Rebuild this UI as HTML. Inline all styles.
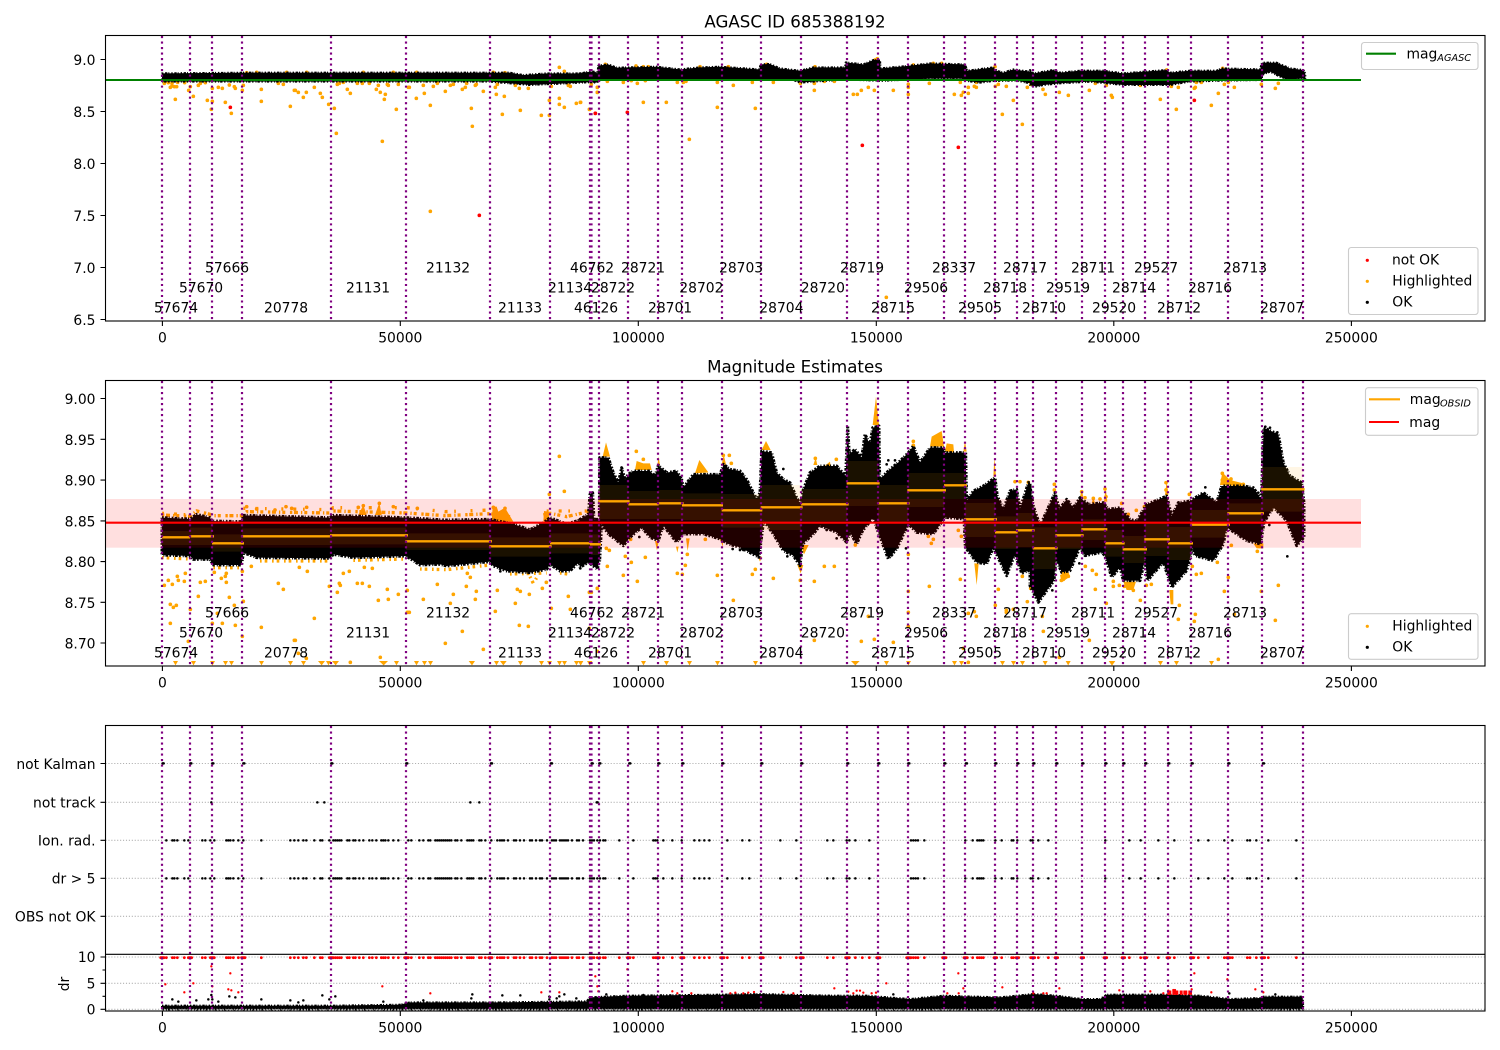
<!DOCTYPE html>
<html><head><meta charset="utf-8"><title>AGASC ID 685388192</title>
<style>
html,body{margin:0;padding:0;background:#fff}
svg{display:block}
text{font-family:"DejaVu Sans","Liberation Sans",sans-serif;font-size:13.89px;fill:#000}
.d{fill:none;stroke-linecap:round}
.vl{stroke:#800080;stroke-width:2.2;stroke-dasharray:2.08 3.43;fill:none}
.gr{stroke:#b0b0b0;stroke-width:1.1;stroke-dasharray:1.1 1.82;fill:none}
.fr{fill:none;stroke:#000;stroke-width:1.1}
.tk{stroke:#000;stroke-width:1.1;fill:none}
.lg{fill:#fff;fill-opacity:.8;stroke:#ccc;stroke-width:1.1}
.bk{fill:#000;stroke:#000;stroke-width:9;stroke-dasharray:5 4 8 3 3 6;stroke-linejoin:round}
.bt{fill:#000;stroke:#000;stroke-width:6;stroke-dasharray:4 5 7 3 3 6;stroke-linejoin:round}
.fz{fill:none;stroke:#ffa500;stroke-width:10}
</style></head><body>
<svg width="1500" height="1050" viewBox="0 0 1500 1050" xmlns="http://www.w3.org/2000/svg">
<rect width="1500" height="1050" fill="#fff"/>

<!-- PANEL 1 -->
<g transform="translate(100,30) scale(.33333)">
<path class="d" stroke="#ffa500" stroke-width="11" d="M193 160h0M205 158h0M216 160h0M211 172h0M216 168h0M223 170h0M230 170h0M233 157h0M254 158h0M226 208h0M266 181h0M271 170h0M280 199h0M295 166h0M301 160h0M316 158h0M322 211h0M337 214h0M334 238h0M337 175h0M355 172h0M367 175h0M376 217h0M388 165h0M394 250h0M403 170h0M406 175h0M427 181h0M430 166h0M484 178h0M484 214h0M535 160h0M550 163h0M571 229h0M583 181h0M586 181h0M595 187h0M610 202h0M619 187h0M643 172h0M661 190h0M667 202h0M686 223h0M703 235h0M709 310h0M712 163h0M718 160h0M730 157h0M742 178h0M751 190h0M772 160h0M787 160h0M808 160h0M829 178h0M835 166h0M841 187h0M847 334h0M853 208h0M856 193h0M862 163h0M865 166h0M889 238h0M895 163h0M925 172h0M928 172h0M949 205h0M970 166h0M973 190h0M991 226h0M991 544h0M1000 169h0M1012 160h0M1036 184h0M1051 166h0M1060 163h0M1087 178h0M1096 172h0M1100 160h0M1114 235h0M1117 289h0M1126 166h0M1129 163h0M1150 184h0M1186 172h0M1192 163h0M1189 193h0M1207 253h0M1213 199h0M1246 166h0M1258 175h0M1261 241h0M1285 175h0M1324 256h0M1348 256h0M1348 211h0M1354 169h0M1378 205h0M1378 112h0M1378 223h0M1393 124h0M1393 232h0M1405 166h0M1411 169h0M1429 220h0M1441 217h0M1468 238h0M1492 172h0M1492 187h0M440 128h0M470 127h0M560 127h0M620 127h0M790 127h0M880 127h0M950 127h0M1180 127h0M1215 128h0"/>
<path class="d" stroke="#f00" stroke-width="11" d="M391 232h0M1138 556h0M1486 250h0"/>
<polygon class="bt" points="186,130 430,128 1230,128 1270,135 1340,130 1470,130 1500,130 1500,155 1400,160 1290,165 1230,160 1170,155 186,155"/>
</g>
<g transform="translate(580,30) scale(.33333)">
<path class="d" stroke="#ffa500" stroke-width="11" d="M2 217h0M29 238h0M34 163h0M52 172h0M52 187h0M82 154h0M130 157h0M154 152h0M172 160h0M190 217h0M196 152h0M259 217h0M292 157h0M310 157h0M318 154h0M328 328h0M412 157h0M412 232h0M460 166h0M517 157h0M526 235h0M580 157h0M661 160h0M703 160h0M703 181h0M733 154h0M763 154h0M820 193h0M832 193h0M844 181h0M865 172h0M883 181h0M919 802h0M940 181h0M985 163h0M985 172h0M985 193h0M1048 160h0M1123 193h0M1141 157h0M1144 196h0M1150 187h0M1165 172h0M1165 190h0M1183 169h0M1189 172h0M1189 157h0M1246 169h0M1255 163h0M1279 169h0M1300 211h0M1267 253h0M1327 283h0M1342 172h0M76 103h0M885 90h0M892 86h0M168 108h0M560 103h0M190 110h0M205 110h0M360 110h0M445 110h0M705 110h0M1000 105h0M1060 100h0M1085 100h0M1245 110h0"/>
<path class="d" stroke="#f00" stroke-width="11" d="M46 250h0M142 247h0M847 346h0M1135 352h0"/>
<polygon class="bt" points="0,130 30,125 42,125 52,130 55,107 85,103 110,113 230,110 300,118 360,112 420,110 538,118 542,103 570,102 600,115 660,122 700,112 795,112 797,97 850,103 880,90 900,90 902,115 980,108 1050,100 1155,103 1162,122 1240,112 1250,122 1270,128 1300,118 1350,125 1350,160 1310,152 1240,153 1200,158 1160,153 1150,146 1050,146 1000,148 900,153 800,148 660,158 640,150 60,150 50,158 0,155"/>
</g>
<g transform="translate(1030,30) scale(.33333)">
<path class="d" stroke="#ffa500" stroke-width="11" d="M3 163h0M39 178h0M46 193h0M88 187h0M115 196h0M178 181h0M196 160h0M229 166h0M244 196h0M247 202h0M331 166h0M391 208h0M424 169h0M445 172h0M439 238h0M493 175h0M496 172h0M499 157h0M514 157h0M544 226h0M565 190h0M583 163h0M595 157h0M613 172h0M694 163h0M736 175h0M745 160h0M410 120h0M578 115h0"/>
<path class="d" stroke="#f00" stroke-width="11" d="M493 211h0"/>
<polygon class="bt" points="0,120 10,130 70,120 90,128 150,122 220,122 280,130 340,125 410,120 420,128 480,122 560,122 575,115 690,118 696,98 740,98 780,115 820,120 826,130 826,145 780,148 760,145 720,125 696,135 696,150 580,152 480,155 420,165 340,165 280,165 230,160 180,155 90,160 40,165 20,170 0,165"/>
</g>
<path d="M105.5 80H1361" stroke="#008000" stroke-width="2.08" fill="none"/>
<path class="vl" d="M162 36V321M190 36V321M212 36V321M242 36V321M331 36V321M406 36V321M490 36V321M550 36V321M590 36V321M591.5 36V321M599 36V321M628 36V321M658 36V321M682 36V321M722 36V321M761 36V321M801 36V321M847 36V321M878 36V321M908 36V321M944 36V321M965 36V321M995 36V321M1017 36V321M1033 36V321M1056 36V321M1082 36V321M1105 36V321M1123 36V321M1145 36V321M1168 36V321M1191 36V321M1228 36V321M1262 36V321M1303 36V321"/>
<g>
<text x="205" y="272.3">57666</text><text x="426" y="272.3">21132</text><text x="570" y="272.3">46762</text><text x="621" y="272.3">28721</text><text x="719" y="272.3">28703</text><text x="840" y="272.3">28719</text><text x="932" y="272.3">28337</text><text x="1003" y="272.3">28717</text><text x="1071" y="272.3">28711</text><text x="1134" y="272.3">29527</text><text x="1223" y="272.3">28713</text>
<text x="179" y="292.3">57670</text><text x="346" y="292.3">21131</text><text x="548" y="292.3">21134</text><text x="591" y="292.3">28722</text><text x="679.3" y="292.3">28702</text><text x="800.8" y="292.3">28720</text><text x="904" y="292.3">29506</text><text x="983" y="292.3">28718</text><text x="1046" y="292.3">29519</text><text x="1112" y="292.3">28714</text><text x="1188" y="292.3">28716</text>
<text x="154" y="312.3">57674</text><text x="264" y="312.3">20778</text><text x="498" y="312.3">21133</text><text x="574" y="312.3">46126</text><text x="648" y="312.3">28701</text><text x="759.3" y="312.3">28704</text><text x="871" y="312.3">28715</text><text x="958" y="312.3">29505</text><text x="1022" y="312.3">28710</text><text x="1092" y="312.3">29520</text><text x="1157" y="312.3">28712</text><text x="1260" y="312.3">28707</text>
</g>
<rect class="fr" x="105.5" y="35.5" width="1379.5" height="285.5"/>
<path class="tk" d="M162.4 321v5M400.3 321v5M638.3 321v5M876.3 321v5M1113.8 321v5M1351.4 321v5M105.5 59.5h-5M105.5 111.5h-5M105.5 163.5h-5M105.5 215.5h-5M105.5 267.5h-5M105.5 319.5h-5"/>
<g text-anchor="end"><text x="95.5" y="65">9.0</text><text x="95.5" y="117">8.5</text><text x="95.5" y="169">8.0</text><text x="95.5" y="221">7.5</text><text x="95.5" y="273">7.0</text><text x="95.5" y="325">6.5</text></g>
<g text-anchor="middle"><text x="162.4" y="342.4">0</text><text x="400.3" y="342.4">50000</text><text x="638.3" y="342.4">100000</text><text x="876.3" y="342.4">150000</text><text x="1113.8" y="342.4">200000</text><text x="1351.4" y="342.4">250000</text></g>
<text x="795" y="27.5" text-anchor="middle" style="font-size:16.67px">AGASC ID 685388192</text>
<rect class="lg" x="1361.5" y="42.5" width="116.5" height="27" rx="2.8"/>
<path d="M1366 53.7h30" stroke="#008000" stroke-width="2.08" fill="none"/>
<text x="1406.5" y="58.5">mag</text><text x="1437.3" y="61" style="font-size:9.72px;font-style:italic">AGASC</text>
<rect class="lg" x="1348.5" y="247.5" width="129.5" height="67" rx="2.8"/>
<circle cx="1367.3" cy="260.3" r="1.6" fill="#f00"/><circle cx="1367.3" cy="281.3" r="1.6" fill="#ffa500"/><circle cx="1367.3" cy="302.3" r="1.6" fill="#000"/>
<text x="1392" y="264.3">not OK</text><text x="1392.3" y="285.3">Highlighted</text><text x="1392.3" y="306.3">OK</text>

<!-- PANEL 2 -->
<g transform="translate(100,375) scale(.33333)">
<path class="fz" stroke-dasharray="7 5 12 9 4 6 9 14" d="M186 420L270 424 290 408 330 418 340 422 426 422 440 410 690 414 700 408 920 414 1035 422 1170 416 1230 425M1330 420L1350 415 1400 425 1465 410"/>
<path class="fz" stroke-dasharray="6 30 9 20 5 44" d="M186 415L270 420M430 400L690 404 700 398 920 398 1035 410 1170 405M1340 408L1465 408"/>
<path fill="#ffa500" d="M1175 440L1178 395 1190 395 1195 410 1215 398 1225 415 1240 440ZM1330 440L1332 408 1345 410 1350 440ZM775 420L790 390 800 420ZM825 420L838 383 845 420Z"/>
<path class="fz" stroke-dasharray="5 9 8 14" d="M340 578L425 578M960 582L1040 584 1170 570M1230 597L1340 594M186 548L270 552M480 558L690 558M760 556L918 552M1290 605L1300 625 1312 605M1380 594L1410 598"/>
<path class="d" stroke="#ffa500" stroke-width="11" d="M1378 244h0M1393 349h0M1348 358h0M205 616h0M217 628h0M193 631h0M232 604h0M235 616h0M256 595h0M253 619h0M301 622h0M316 619h0M295 664h0M211 688h0M220 697h0M229 691h0M211 745h0M271 703h0M265 799h0M343 592h0M379 595h0M376 604h0M364 610h0M379 622h0M388 667h0M403 691h0M406 751h0M337 745h0M367 745h0M352 715h0M430 679h0M427 784h0M427 589h0M454 574h0M484 757h0M535 625h0M550 643h0M598 577h0M622 589h0M643 730h0M583 796h0M586 796h0M595 835h0M619 850h0M688 634h0M712 652h0M718 625h0M721 631h0M730 595h0M748 589h0M772 625h0M787 625h0M808 634h0M793 577h0M817 580h0M835 676h0M841 847h0M751 862h0M862 643h0M865 673h0M895 658h0M922 646h0M922 712h0M928 712h0M970 673h0M1012 628h0M1036 805h0M1051 685h0M1060 658h0M1087 769h0M1099 634h0M1102 595h0M1111 607h0M1126 673h0M1129 649h0M1150 823h0M1186 709h0M1192 646h0M1246 685h0M1252 643h0M1261 649h0M1258 751h0M1285 754h0M1288 658h0M1327 640h0M1339 622h0M1354 700h0M1405 664h0M1411 703h0M1468 652h0M1492 640h0M1492 829h0M1468 760h0M440 395h0M470 402h0M525 405h0M558 395h0M575 400h0M620 397h0M775 397h0M790 392h0M838 385h0M880 395h0M952 400h0M1180 397h0M1215 400h0"/>
<path fill="#ffa500" d="M219 858h15l-7.5 13zM273 858h15l-7.5 13zM315 858h30l-7.5 14-7.5-14zM369 858h15l-7.5 13zM387 858h15l-7.5 13zM477 858h15l-7.5 13zM564 858h15l-7.5 13zM603 858h15l-7.5 13zM654 858h21l-10 13zM678 858h15l-7.5 13zM696 858h21l-10 13zM837 858h27l-13 13zM882 858h15l-7.5 13zM942 858h15l-7.5 13zM966 858h15l-7.5 13zM984 858h15l-7.5 13zM1106 858h19l-9 13zM1182 858h15l-7.5 13zM1200 858h20l-10 13zM1254 858h15l-7.5 13zM1317 858h15l-7.5 13zM1341 858h15l-7.5 13zM1371 858h15l-7.5 13zM1386 858h15l-7.5 13zM1422 858h15l-7.5 13zM1434 858h15l-7.5 13zM1461 858h15l-7.5 13z"/>
<polygon class="bk" points="186,428 270,432 290,418 330,428 336,438 426,440 430,421 690,428 700,421 920,428 1035,435 1170,433 1240,447 1290,464 1330,443 1350,428 1400,447 1450,432 1450,563 1440,558 1410,588 1380,588 1350,568 1340,583 1290,593 1220,588 1180,573 1170,560 1040,573 1020,568 960,570 918,543 760,548 700,538 690,550 470,548 430,533 425,570 340,570 330,553 280,553 270,543 186,540"/>
<path class="d" stroke="#000" stroke-width="8" d="M1201 589h0M1216 580h0M1441 580h0"/>
</g>
<g transform="translate(580,375) scale(.33333)">
<path fill="#ffa500" d="M68 245L78 202L90 245ZM165 285L170 258L190 265L210 265L215 285ZM232 270L236 245L240 270ZM345 295L358 255L385 292ZM425 270L431 238L438 268ZM545 225L558 198L572 225ZM700 270L707 248L712 270ZM735 272L750 260L752 275ZM878 150L888 65L897 150ZM1050 215L1055 185L1085 168L1092 215ZM1095 230L1100 205L1120 208L1122 232ZM1150 230L1155 198L1160 230ZM1240 305L1243 248L1248 305ZM225 498H236L231 527ZM288 515H296L292 533ZM318 490H329L323 528ZM418 490H429V515ZM533 545H546L540 560ZM652 570H670L662 595ZM662 510H686L672 538ZM1183 565H1196L1190 630Z"/>
<path class="d" stroke="#ffa500" stroke-width="11" d="M169 229h0M190 253h0M448 241h0M454 265h0M430 241h0M769 253h0M706 250h0M1000 199h0M1000 211h0M82 574h0M79 520h0M88 526h0M136 544h0M154 562h0M172 619h0M130 601h0M196 547h0M292 595h0M307 598h0M316 571h0M322 538h0M412 601h0M460 676h0M517 598h0M526 583h0M580 610h0M661 616h0M703 619h0M733 574h0M763 574h0M703 796h0M844 799h0M883 793h0M865 724h0M940 802h0M985 649h0M985 538h0M985 712h0M985 754h0M1048 634h0M1141 613h0M1135 466h0M1144 484h0M1045 484h0M1060 493h0M1054 505h0M1150 820h0M1165 862h0M1165 715h0M1189 724h0M1183 710h0M1246 691h0M1255 643h0M1279 706h0M1327 604h0M1300 703h0M1279 712h0M52 640h0M34 652h0M29 520h0M152 493h0M376 493h0M826 510h0M1342 680h0M1305 320h0M1320 320h0M1345 322h0"/>
<path fill="#ffa500" d="M-5 858h15l-7.5 13zM22 858h15l-7.5 13zM183 858h15l-7.5 13zM252 858h15l-7.5 13zM321 858h15l-7.5 13zM405 858h15l-7.5 13zM519 858h15l-7.5 13zM813 858h26l-13 13zM912 858h15l-7.5 13zM978 858h15l-7.5 13zM1116 858h15l-7.5 13zM1137 858h15l-7.5 13zM1260 858h15l-7.5 13zM1293 858h15l-7.5 13zM1320 858h15l-7.5 13z"/>
<polygon class="bk" points="0,433 25,418 30,358 38,353 42,433 58,433 59,248 85,248 100,293 115,323 125,278 135,313 145,298 160,288 210,288 225,303 235,271 260,293 290,288 305,313 310,338 340,298 390,298 420,298 431,268 450,283 480,288 500,313 530,373 540,353 545,228 575,233 590,293 610,313 630,323 650,368 662,388 670,343 690,293 720,273 770,273 797,303 803,153 808,238 825,223 845,248 855,178 870,208 878,158 897,153 899,313 930,283 960,258 985,233 1000,213 1020,263 1050,218 1090,218 1095,233 1157,233 1160,378 1180,348 1210,333 1245,308 1252,363 1270,403 1290,348 1310,343 1320,403 1345,323 1350,323 1350,587 1345,587 1325,595 1305,537 1280,602 1240,517 1220,567 1190,562 1156,517 1152,432 1095,427 1060,477 1010,472 985,447 950,522 925,552 893,467 880,427 848,467 830,507 810,472 800,502 770,472 720,452 700,477 668,507 660,572 640,542 610,527 580,477 551,437 537,547 480,517 445,507 420,492 370,477 310,477 290,502 250,452 235,497 210,487 185,457 150,487 130,512 85,477 65,447 59,557 52,582 25,562 0,577"/>
<path class="d" stroke="#000" stroke-width="8" d="M925 256h0M945 256h0M920 268h0M940 283h0M610 282h0M458 522h0M480 525h0M490 525h0M622 544h0M740 465h0M770 490h0M178 486h0M1230 528h0M978 520h0"/>
</g>
<g transform="translate(1030,375) scale(.33333)">
<path fill="#ffa500" d="M222 380L227 338L232 380ZM150 365L155 345L160 365ZM185 385L190 365L195 385ZM405 360L410 318L415 360ZM570 330L577 292L600 315L640 325L645 335ZM418 645H430V688H422ZM280 620H318L310 645L290 645ZM90 600L115 590L120 605L95 622ZM670 505H700V520H680Z"/>
<path class="d" stroke="#ffa500" stroke-width="11" d="M73 328h0M73 345h0M155 350h0M165 368h0M190 370h0M210 372h0M225 342h0M228 365h0M275 385h0M295 418h0M319 406h0M343 395h0M408 323h0M408 345h0M478 358h0M577 295h0M577 315h0M603 312h0M615 325h0M640 328h0M40 769h0M88 847h0M178 796h0M166 574h0M187 586h0M199 598h0M196 643h0M229 685h0M250 619h0M250 634h0M268 631h0M283 634h0M298 640h0M310 646h0M331 676h0M349 631h0M364 628h0M100 595h0M109 595h0M115 604h0M94 616h0M100 613h0M37 724h0M445 733h0M448 691h0M496 718h0M493 739h0M487 574h0M499 598h0M514 595h0M565 853h0M583 649h0M595 607h0M604 511h0M613 718h0M682 529h0M694 649h0M745 631h0M736 736h0M562 562h0M2 640h0"/>
<path fill="#ffa500" d="M38 858h15l-7.5 13zM107 858h15l-7.5 13zM236 858h20l-10 14zM384 858h15l-7.5 13zM432 858h15l-7.5 13zM537 858h15l-7.5 13z"/>
<polygon class="bk" points="0,333 10,393 30,453 75,353 88,403 110,373 130,398 150,368 175,388 220,383 235,403 270,398 300,433 320,438 350,388 375,378 410,363 425,423 445,383 480,378 520,353 560,383 575,333 640,333 670,338 694,373 701,158 745,178 760,263 780,303 815,323 822,383 822,487 800,512 770,437 730,397 702,442 692,507 650,497 590,457 580,507 550,557 495,542 488,517 470,587 425,637 400,562 352,617 345,552 330,617 280,617 270,577 245,607 225,542 215,532 165,542 150,517 120,587 95,592 78,552 72,617 50,647 25,682 0,632"/>
<path class="d" stroke="#000" stroke-width="8" d="M772 544h0M526 337h0M550 390h0M148 565h0M67 646h0M685 353h0M718 450h0M706 155h0M720 158h0M742 172h0"/>
</g>
<!-- pink band, stats -->
<rect x="105.5" y="499" width="1255.5" height="48.7" fill="#f00" fill-opacity=".125"/>
<g fill="#ffa500" fill-opacity=".1">
<g transform="translate(100,375) scale(.33333)">
<path d="M186 468H270V510H186ZM270 458H336V510H270ZM336 478H426V530H336ZM426 460H693V510H426ZM693 458H918V508H693ZM918 475H1170V525H918ZM1170 487H1350V545H1170ZM1350 475H1473V535H1350ZM1473 478H1497V540H1473Z"/>
</g>
<g transform="translate(580,375) scale(.33333)">
<path d="M57 330H145V432H57ZM145 348H234V432H145ZM234 345H306V432H234ZM306 355H426V435H306ZM426 357H543V458H426ZM543 330H663V465H543ZM663 342H801V438H663ZM801 258H894V393H801ZM894 330H984V440H894ZM984 294H1092V396H984ZM1092 294H1155V372H1092ZM1155 384H1245V486H1155ZM1245 424H1311V522H1245ZM1311 414H1350V516H1311Z"/>
</g>
<g transform="translate(1030,375) scale(.33333)">
<path d="M0 414H9V516H0ZM9 457H78V582H9ZM78 445H156V522H78ZM156 433H225V495H156ZM225 465H279V545H225ZM279 483H345V564H279ZM345 445H414V543H345ZM414 456H483V555H414ZM483 405H594V488H483ZM594 385H696V445H594ZM696 276H819V410H696Z"/>
</g>
</g>
<g stroke="#ffa500" fill="none">
<path transform="translate(100,375) scale(.33333)" stroke-width="7" d="M186 487H270M270 484H342M336 505H432M424 484H694M690 481H924M916 499H1176M1168 514H1355M1350 505H1476M1473 508H1497"/>
<path transform="translate(580,375) scale(.33333)" stroke-width="7" d="M30 508H63M55 379H149M145 388H236M232 385H311M306 391H429M425 406H547M542 397H668M663 388H806M800 325H899M893 385H989M982 346H1098M1092 331H1161M1152 433H1251M1245 472H1313M1308 466H1350"/>
<path transform="translate(1030,375) scale(.33333)" stroke-width="7" d="M0 466H14M8 520H83M76 481H161M154 463H232M226 505H284M278 523H351M343 493H420M414 505H489M481 449H600M592 415H702M694 343H824"/>
</g>
<path d="M105.5 522.7H1361" stroke="#f00" stroke-width="2.08" fill="none"/>
<path class="vl" d="M162 381V666M190 381V666M212 381V666M242 381V666M331 381V666M406 381V666M490 381V666M550 381V666M590 381V666M591.5 381V666M599 381V666M628 381V666M658 381V666M682 381V666M722 381V666M761 381V666M801 381V666M847 381V666M878 381V666M908 381V666M944 381V666M965 381V666M995 381V666M1017 381V666M1033 381V666M1056 381V666M1082 381V666M1105 381V666M1123 381V666M1145 381V666M1168 381V666M1191 381V666M1228 381V666M1262 381V666M1303 381V666"/>
<g>
<text x="205" y="617.3">57666</text><text x="426" y="617.3">21132</text><text x="570" y="617.3">46762</text><text x="621" y="617.3">28721</text><text x="719" y="617.3">28703</text><text x="840" y="617.3">28719</text><text x="932" y="617.3">28337</text><text x="1003" y="617.3">28717</text><text x="1071" y="617.3">28711</text><text x="1134" y="617.3">29527</text><text x="1223" y="617.3">28713</text>
<text x="179" y="637.3">57670</text><text x="346" y="637.3">21131</text><text x="548" y="637.3">21134</text><text x="591" y="637.3">28722</text><text x="679.3" y="637.3">28702</text><text x="800.8" y="637.3">28720</text><text x="904" y="637.3">29506</text><text x="983" y="637.3">28718</text><text x="1046" y="637.3">29519</text><text x="1112" y="637.3">28714</text><text x="1188" y="637.3">28716</text>
<text x="154" y="657.3">57674</text><text x="264" y="657.3">20778</text><text x="498" y="657.3">21133</text><text x="574" y="657.3">46126</text><text x="648" y="657.3">28701</text><text x="759.3" y="657.3">28704</text><text x="871" y="657.3">28715</text><text x="958" y="657.3">29505</text><text x="1022" y="657.3">28710</text><text x="1092" y="657.3">29520</text><text x="1157" y="657.3">28712</text><text x="1260" y="657.3">28707</text>
</g>
<rect class="fr" x="105.5" y="380.5" width="1379.5" height="285.5"/>
<path class="tk" d="M162.4 666v5M400.3 666v5M638.3 666v5M876.3 666v5M1113.8 666v5M1351.4 666v5M105.5 398.5h-5M105.5 439.3h-5M105.5 480.1h-5M105.5 520.9h-5M105.5 561.6h-5M105.5 602.3h-5M105.5 643h-5"/>
<g text-anchor="end"><text x="95.5" y="404">9.00</text><text x="95.5" y="444.8">8.95</text><text x="95.5" y="485.6">8.90</text><text x="95.5" y="526.4">8.85</text><text x="95.5" y="567.1">8.80</text><text x="95.5" y="607.8">8.75</text><text x="95.5" y="648.5">8.70</text></g>
<g text-anchor="middle"><text x="162.4" y="687.4">0</text><text x="400.3" y="687.4">50000</text><text x="638.3" y="687.4">100000</text><text x="876.3" y="687.4">150000</text><text x="1113.8" y="687.4">200000</text><text x="1351.4" y="687.4">250000</text></g>
<text x="795" y="372.5" text-anchor="middle" style="font-size:16.67px">Magnitude Estimates</text>
<rect class="lg" x="1365.5" y="387.7" width="112.5" height="47.6" rx="2.8"/>
<path d="M1369 399.3h31" stroke="#ffa500" stroke-width="2.08" fill="none"/>
<path d="M1369 422h30" stroke="#f00" stroke-width="2.08" fill="none"/>
<text x="1409.8" y="404">mag</text><text x="1440" y="406.3" style="font-size:9.72px;font-style:italic">OBSID</text>
<text x="1409.3" y="427">mag</text>
<rect class="lg" x="1348.5" y="613.7" width="129.5" height="45.6" rx="2.8"/>
<circle cx="1367.3" cy="626.3" r="1.6" fill="#ffa500"/><circle cx="1367.3" cy="647.3" r="1.6" fill="#000"/>
<text x="1392.3" y="630.3">Highlighted</text><text x="1392.3" y="651.3">OK</text>

<!-- PANEL 3 -->
<path class="gr" d="M105.5 763.5H1485M105.5 802.3H1485M105.5 840.3H1485M105.5 878.3H1485M105.5 916.3H1485M105.5 957H1485M105.5 983.3H1485"/>
<g transform="translate(0,720) scale(.33333)">
<polygon class="bt" points="486,857 1000,857 1200,854 1230,847 1500,847 1500,868 486,868"/>
<path class="d" stroke="#000" stroke-width="7.5" d="M517 838h0M535 845h0M589 841h0M625 838h0M634 825h0M637 838h0M655 845h0M688 829h0M706 832h0M784 838h0M871 841h0M895 847h0M910 841h0M967 826h0M1006 829h0M988 838h0M1150 845h0M1270 841h0M1414 835h0M1417 823h0M952 247h0M973 247h0M1411 247h0M1438 247h0M634 247h0M488 130h3M571 130h3M637 130h3M730 130h3M994 130h3M1219 130h3M1473 130h3"/>
<path class="d" stroke="#f00" stroke-width="7" d="M496 793h0M553 817h0M580 790h0M634 739h0M637 799h0M691 760h0M685 808h0M694 811h0M715 817h0M1147 799h0M1291 820h0"/>
<path id="r7" class="d" d="M499 0h0M517 0h0M523 0h0M532 0h0M553 0h0M565 0h0M607 0h0M616 0h0M631 0h0M643 0h0M679 0h0M685 0h0M691 0h0M700 0h0M715 0h0M730 0h0M784 0h0M871 0h0M883 0h0M895 0h0M910 0h0M919 0h0M943 0h0M961 0h0M967 0h0M988 0h0M1000 0h0M1006 0h0M1012 0h0M1018 0h0M1024 0h0M1042 0h0M1048 0h0M1060 0h0M1066 0h0M1078 0h0M1090 0h0M1108 0h0M1117 0h0M1129 0h0M1144 0h0M1150 0h0M1156 0h0M1165 0h0M1180 0h0M1195 0h0M1225 0h0M1234 0h0M1258 0h0M1270 0h0M1285 0h0M1291 0h0M1306 0h0M1312 0h0M1318 0h0M1324 0h0M1330 0h0M1336 0h0M1342 0h0M1348 0h0M1354 0h0M1366 0h0M1372 0h0M1384 0h0M1402 0h0M1408 0h0M1414 0h0M1420 0h0M1438 0h0M1444 0h0M1456 0h0M1474 0h0M1492 0h0" stroke="#000" stroke-width="7.5" transform="translate(0,361)"/>
<use href="#r7" y="114"/>
<path class="d" stroke="#f00" stroke-width="8.5" transform="translate(0,713)" d="M499 0h0M517 0h0M523 0h0M532 0h0M553 0h0M565 0h0M607 0h0M616 0h0M631 0h0M643 0h0M679 0h0M685 0h0M691 0h0M700 0h0M715 0h0M730 0h0M784 0h0M871 0h0M883 0h0M895 0h0M910 0h0M919 0h0M943 0h0M961 0h0M967 0h0M988 0h0M1000 0h0M1006 0h0M1012 0h0M1018 0h0M1024 0h0M1042 0h0M1048 0h0M1060 0h0M1066 0h0M1078 0h0M1090 0h0M1108 0h0M1117 0h0M1129 0h0M1144 0h0M1150 0h0M1156 0h0M1165 0h0M1180 0h0M1195 0h0M1225 0h0M1234 0h0M1258 0h0M1270 0h0M1285 0h0M1291 0h0M1306 0h0M1312 0h0M1318 0h0M1324 0h0M1330 0h0M1336 0h0M1342 0h0M1348 0h0M1354 0h0M1366 0h0M1372 0h0M1384 0h0M1402 0h0M1408 0h0M1414 0h0M1420 0h0M1438 0h0M1444 0h0M1456 0h0M1474 0h0M1492 0h0M482 0h10M565 0h10M631 0h10M725 0h10M988 0h10M1214 0h10M1466 0h10"/>
</g>
<g transform="translate(500,720) scale(.33333)">
<polygon class="bt" points="0,847 260,844 270,832 380,827 660,824 780,822 850,824 1000,827 1100,827 1230,837 1280,832 1330,827 1500,832 1500,868 0,868"/>
<path class="d" stroke="#000" stroke-width="7.5" d="M7 826h0M61 826h0M148 830h0M148 838h0M170 835h0M178 829h0M193 823h0M229 835h0M319 823h0M430 825h0M1180 823h0M290 247h3M153 130h3M275 130h3M298 130h3M388 130h3M475 130h3M547 130h3M667 130h3M784 130h3M904 130h3M1042 130h3M1135 130h3M1225 130h3M1333 130h3M1398 130h3M1486 130h3"/>
<path class="d" stroke="#f00" stroke-width="7" d="M124 817h0M178 817h0M382 748h0M286 769h0M292 799h0M295 814h0M517 814h0M532 820h0M574 820h0M691 820h0M706 818h0M730 820h0M745 818h0M762 816h0M850 816h0M880 820h0M1003 805h0M1045 815h0M1060 820h0M1070 812h0M1080 812h0M1090 818h0M1115 820h0M1128 818h0M1159 790h0M1375 760h0M1390 805h0M1342 820h0M1376 820h0"/>
<path id="r8" class="d" stroke="#000" stroke-width="7.5" transform="translate(0,361)" d="M0 0h0M6 0h0M12 0h0M24 0h0M42 0h0M48 0h0M60 0h0M72 0h0M90 0h0M96 0h0M108 0h0M120 0h0M126 0h0M141 0h0M156 0h0M162 0h0M168 0h0M180 0h0M186 0h0M192 0h0M198 0h0M204 0h0M216 0h0M231 0h0M237 0h0M249 0h0M270 0h0M276 0h0M282 0h0M292 0h0M300 0h0M310 0h0M316 0h0M358 0h0M400 0h0M460 0h0M466 0h0M472 0h0M490 0h0M517 0h0M545 0h0M583 0h0M598 0h0M613 0h0M628 0h0M682 0h0M727 0h0M748 0h0M841 0h0M889 0h0M982 0h0M1000 0h0M1040 0h0M1048 0h0M1066 0h0M1108 0h0M1233 0h0M1240 0h0M1247 0h0M1254 0h0M1273 0h0M1396 0h0M1418 0h0M1432 0h0M1438 0h0M1444 0h0M1450 0h0M1486 0h0"/>
<use href="#r8" y="114"/>
<path class="d" stroke="#f00" stroke-width="8.5" transform="translate(0,713)" d="M0 0h0M6 0h0M12 0h0M24 0h0M42 0h0M48 0h0M60 0h0M72 0h0M90 0h0M96 0h0M108 0h0M120 0h0M126 0h0M141 0h0M156 0h0M162 0h0M168 0h0M180 0h0M186 0h0M192 0h0M198 0h0M204 0h0M216 0h0M231 0h0M237 0h0M249 0h0M270 0h0M276 0h0M282 0h0M292 0h0M300 0h0M310 0h0M316 0h0M358 0h0M400 0h0M460 0h0M466 0h0M472 0h0M490 0h0M517 0h0M545 0h0M583 0h0M598 0h0M613 0h0M628 0h0M682 0h0M727 0h0M748 0h0M841 0h0M889 0h0M982 0h0M1000 0h0M1040 0h0M1048 0h0M1066 0h0M1087 0h0M1108 0h0M1233 0h0M1240 0h0M1247 0h0M1254 0h0M1273 0h0M1396 0h0M1418 0h0M1432 0h0M1438 0h0M1444 0h0M1450 0h0M1486 0h0M382 0h8M470 0h8M542 0h10M662 0h10M780 0h10M900 0h10M1037 0h10M1130 0h10M1220 0h10M1328 0h10M1392 0h10M1482 0h8"/>
</g>
<g transform="translate(1000,720) scale(.33333)">
<polygon class="bt" points="0,832 50,827 100,822 170,827 245,837 300,837 320,824 500,824 600,827 690,837 780,834 790,830 908,830 910,868 0,868"/>
<path class="fz" stroke="#f00" style="stroke:#f00;stroke-width:13" stroke-dasharray="12 3 18 4 9 2" d="M502 818H576"/>
<path class="d" stroke="#000" stroke-width="7.5" d="M826 823h0M688 820h0M52 130h3M100 130h3M169 130h3M247 130h3M316 130h3M370 130h3M436 130h3M505 130h3M575 130h3M685 130h3M789 130h3"/>
<path class="d" stroke="#f00" stroke-width="7" d="M7 802h0M100 820h0M130 820h0M140 820h0M178 805h0M358 811h0M451 814h0M490 820h0M583 760h0M634 817h0M682 778h0M766 808h0M790 817h0M575 808h0M505 812h0M520 810h0M525 810h0"/>
<path id="r9" class="d" stroke="#000" stroke-width="7.5" transform="translate(0,361)" d="M5 0h0M35 0h0M40 0h0M52 0h0M92 0h0M98 0h0M115 0h0M145 0h0M316 0h0M388 0h0M422 0h0M475 0h0M523 0h0M595 0h0M625 0h0M673 0h0M697 0h0M742 0h0M750 0h0M769 0h0M805 0h0M889 0h0"/>
<use href="#r9" y="114"/>
<path class="d" stroke="#f00" stroke-width="8.5" transform="translate(0,713)" d="M5 0h0M35 0h0M40 0h0M52 0h0M92 0h0M98 0h0M115 0h0M145 0h0M316 0h0M388 0h0M422 0h0M475 0h0M523 0h0M595 0h0M625 0h0M673 0h0M697 0h0M742 0h0M750 0h0M769 0h0M805 0h0M889 0h0M48 0h8M94 0h10M165 0h8M243 0h8M312 0h8M366 0h8M432 0h8M501 0h8M571 0h10M680 0h10M784 0h10"/>
</g>
<path class="gr" d="M105.5 1009.3H1485"/>
<path class="vl" d="M162 726V1011M190 726V1011M212 726V1011M242 726V1011M331 726V1011M406 726V1011M490 726V1011M550 726V1011M590 726V1011M591.5 726V1011M599 726V1011M628 726V1011M658 726V1011M682 726V1011M722 726V1011M761 726V1011M801 726V1011M847 726V1011M878 726V1011M908 726V1011M944 726V1011M965 726V1011M995 726V1011M1017 726V1011M1033 726V1011M1056 726V1011M1082 726V1011M1105 726V1011M1123 726V1011M1145 726V1011M1168 726V1011M1191 726V1011M1228 726V1011M1262 726V1011M1303 726V1011"/>
<rect class="fr" x="105.5" y="725.5" width="1379.5" height="285.5"/>
<path d="M105.5 954.3H1485" stroke="#000" stroke-width="1.1" fill="none"/>
<path class="tk" d="M162.4 1011v5M400.3 1011v5M638.3 1011v5M876.3 1011v5M1113.8 1011v5M1351.4 1011v5M105.5 763.5h-5M105.5 802.3h-5M105.5 840.3h-5M105.5 878.3h-5M105.5 916.3h-5M105.5 957h-5M105.5 983.3h-5M105.5 1009.3h-5M105.5 970h-3M105.5 996.3h-3"/>
<g text-anchor="end"><text x="95.5" y="769">not Kalman</text><text x="95.5" y="807.3">not track</text><text x="95.5" y="845.4">Ion. rad.</text><text x="95.5" y="883.4">dr &gt; 5</text><text x="95.5" y="921.4">OBS not OK</text><text x="95.5" y="962.1">10</text><text x="95.5" y="988.4">5</text><text x="95.5" y="1014.4">0</text></g>
<text x="0" y="0" text-anchor="middle" transform="translate(69,984) rotate(-90)">dr</text>
<g text-anchor="middle"><text x="162.4" y="1032.4">0</text><text x="400.3" y="1032.4">50000</text><text x="638.3" y="1032.4">100000</text><text x="876.3" y="1032.4">150000</text><text x="1113.8" y="1032.4">200000</text><text x="1351.4" y="1032.4">250000</text></g>
</svg>
</body></html>
